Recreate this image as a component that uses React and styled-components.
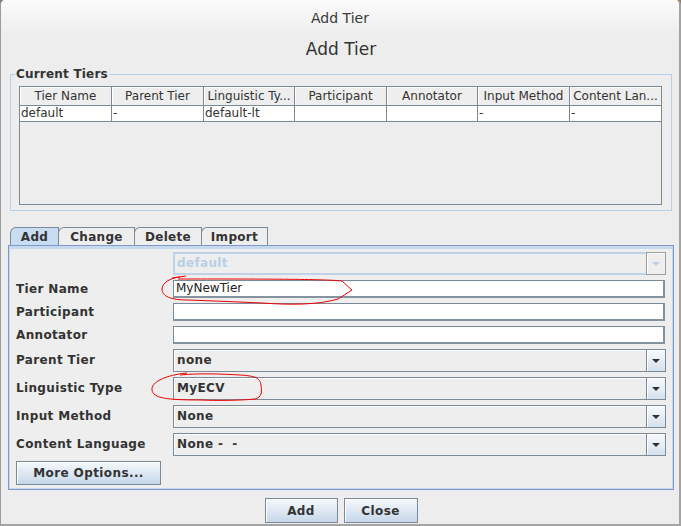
import styled, { createGlobalStyle } from "styled-components";

const GlobalStyle = createGlobalStyle`
  html, body {
    margin: 0;
    padding: 0;
    background: #8f7c66;
  }
  * {
    box-sizing: border-box;
  }
`;

const Window = styled.div`
  width: 681px;
  height: 526px;
  background: #ededed;
  border-left: 1px solid #9b9b9b;
  border-right: 2px solid #a3a3a3;
  border-bottom: 2px solid #a3a3a3;
  border-radius: 5px 5px 0 0;
  overflow: hidden;
  position: relative;
  font-family: "DejaVu Sans", "Liberation Sans", sans-serif;
  color: #333333;
`;

const TitleBar = styled.div`
  height: 36px;
  line-height: 36px;
  text-align: center;
  font-size: 14px;
  color: #3a3a3a;
  background: linear-gradient(#fbfbfb, #ededed);
`;

const Content = styled.div`
  padding: 0 5px 0 7px;
`;

const Heading = styled.div`
  margin-top: 3px;
  height: 20px;
  line-height: 20px;
  text-align: center;
  font-size: 17px;
  color: #333;
`;

const Group = styled.fieldset`
  margin: 8px 2px 0 2px;
  padding: 5px 9px 5px 8px;
  border: 1px solid #b8cfe5;
  min-width: 0;
`;

const Legend = styled.legend`
  padding: 0 1px;
  margin-left: -4px;
  font-size: 12px;
  line-height: 14px;
  font-weight: bold;
  letter-spacing: 0.2px;
  color: #333;
`;

const Table = styled.div`
  width: 643px;
  height: 119px;
  border: 1px solid #7a8a99;
  background: #ededed;
`;

const TableRow = styled.div`
  display: grid;
  grid-template-columns: 92px 92px 91px 92px 91px 92px 91px;
`;

const HeaderCell = styled.div`
  height: 19px;
  line-height: 18px;
  font-size: 12px;
  text-align: center;
  white-space: nowrap;
  overflow: hidden;
  background: #eeeeee;
  border-right: 1px solid #7a8a99;
  border-bottom: 1px solid #7a8a99;
  box-shadow: inset 1px 1px 0 #ffffff;
  &:last-child {
    border-right: none;
  }
`;

const Cell = styled.div`
  height: 16px;
  line-height: 15px;
  font-size: 12px;
  padding-left: 1px;
  white-space: nowrap;
  overflow: hidden;
  background: #ffffff;
  border-right: 1px solid #7a8a99;
  border-bottom: 1px solid #7a8a99;
  &:last-child {
    border-right: none;
  }
`;

const TabStrip = styled.div`
  display: flex;
  margin: 16px 0 0 2px;
  height: 18px;
`;

const Tab = styled.div`
  width: ${(p) => p.$w}px;
  height: 18px;
  margin-left: -1px;
  line-height: 18px;
  text-align: center;
  font-size: 12px;
  font-weight: bold;
  letter-spacing: 0.3px;
  color: #333;
  border: 1px solid #7a8a99;
  border-bottom: none;
  border-top-left-radius: 6px;
  background: ${(p) => (p.$active ? "#c8ddf2" : "#eeeeee")};
  &:first-child {
    margin-left: 0;
  }
`;

const Panel = styled.div`
  height: 245px;
  border: 1px solid #7c99c7;
  box-shadow: inset 0 0 0 1px #c6d9ee, inset 0 3px 0 #c6d9ee;
  background: #eeeeee;
  padding: 6px 7px 0 7px;
`;

const Form = styled.div`
  display: grid;
  grid-template-columns: 157px 1fr;
  row-gap: 5px;
  align-items: center;
`;

const Label = styled.div`
  margin-bottom: ${(p) => (p.$combo ? "2px" : "0")};
  font-size: 12px;
  font-weight: bold;
  letter-spacing: 0.35px;
  color: #333;
  white-space: nowrap;
`;

const TextField = styled.div`
  height: 18px;
  margin-right: 1px;
  background: #ffffff;
  border: 1px solid #7a8a99;
  border-right-width: 2px;
  border-bottom-width: 2px;
  border-right-color: #8593a1;
  border-bottom-color: #8593a1;
  font-size: 12px;
  line-height: 15px;
  padding-left: 2px;
  color: #222;
`;

const Combo = styled.div`
  display: flex;
  height: 23px;
`;

const ComboValue = styled.div`
  flex: 1;
  border: ${(p) => (p.$disabled ? "2px solid #bfd2e8" : "1px solid #7a8a99")};
  border-right: none;
  background: #eeeeee;
  box-shadow: ${(p) => (p.$disabled ? "none" : "inset 1px 1px 0 #ffffff")};
  font-size: 12px;
  font-weight: bold;
  letter-spacing: 0.35px;
  line-height: ${(p) => (p.$disabled ? "19px" : "21px")};
  padding-left: ${(p) => (p.$disabled ? "2px" : "3px")};
  color: ${(p) => (p.$disabled ? "#b8cfe5" : "#333")};
  white-space: pre;
`;

const ComboArrow = styled.div`
  width: 20px;
  display: flex;
  align-items: center;
  justify-content: center;
  border: 1px solid ${(p) => (p.$disabled ? "#9e9e9e" : "#7a8a99")};
  background: ${(p) =>
    p.$disabled ? "#eeeeee" : "linear-gradient(#f8fafd, #d5e1ee)"};
  box-shadow: inset 1px 1px 0 #ffffff;
  &::after {
    content: "";
    border-left: 4px solid transparent;
    border-right: 4px solid transparent;
    border-top: 4px solid ${(p) => (p.$disabled ? "#b8cfe5" : "#333")};
  }
`;

const Button = styled.button`
  display: block;
  width: ${(p) => p.$w}px;
  height: ${(p) => p.$h || 25}px;
  padding: 0;
  font-family: "DejaVu Sans", "Liberation Sans", sans-serif;
  font-size: 12px;
  font-weight: bold;
  letter-spacing: 0.4px;
  color: #333;
  border: 1px solid #7a8a99;
  border-radius: 0;
  background: linear-gradient(#f6f9fc, #c6d7ea);
  box-shadow: inset 1px 1px 0 #ffffff;
`;

const OptionsRow = styled.div`
  margin-top: 5px;
`;

const ButtonRow = styled.div`
  display: flex;
  justify-content: center;
  gap: 6px;
  margin-top: 8px;
`;

const Annotations = styled.svg`
  position: absolute;
  left: -1px;
  top: 0;
  pointer-events: none;
`;

function ComboBox({ value, disabled }) {
  return (
    <Combo>
      <ComboValue $disabled={disabled}>{value}</ComboValue>
      <ComboArrow $disabled={disabled} />
    </Combo>
  );
}

const columns = [
  "Tier Name",
  "Parent Tier",
  "Linguistic Ty...",
  "Participant",
  "Annotator",
  "Input Method",
  "Content Lan...",
];
const tierRow = ["default", "-", "default-lt", "", "", "-", "-"];

export default function App() {
  return (
    <>
      <GlobalStyle />
      <Window>
        <TitleBar>Add Tier</TitleBar>
        <Content>
          <Heading>Add Tier</Heading>
          <Group>
            <Legend>Current Tiers</Legend>
            <Table>
              <TableRow>
                {columns.map((c) => (
                  <HeaderCell key={c}>{c}</HeaderCell>
                ))}
              </TableRow>
              <TableRow>
                {tierRow.map((v, i) => (
                  <Cell key={i}>{v}</Cell>
                ))}
              </TableRow>
            </Table>
          </Group>

          <TabStrip>
            <Tab $w={49} $active>Add</Tab>
            <Tab $w={77}>Change</Tab>
            <Tab $w={68}>Delete</Tab>
            <Tab $w={67}>Import</Tab>
          </TabStrip>
          <Panel>
            <Form>
              <div />
              <ComboBox value="default" disabled />
              <Label>Tier Name</Label>
              <TextField>MyNewTier</TextField>
              <Label>Participant</Label>
              <TextField />
              <Label>Annotator</Label>
              <TextField />
              <Label $combo>Parent Tier</Label>
              <ComboBox value="none" />
              <Label $combo>Linguistic Type</Label>
              <ComboBox value="MyECV" />
              <Label $combo>Input Method</Label>
              <ComboBox value="None" />
              <Label $combo>Content Language</Label>
              <ComboBox value="None -  -" />
            </Form>
            <OptionsRow>
              <Button $w={145} $h={24}>More Options...</Button>
            </OptionsRow>
          </Panel>
          <ButtonRow>
            <Button $w={73}>Add</Button>
            <Button $w={74}>Close</Button>
          </ButtonRow>
        </Content>
        <Annotations width="681" height="526" viewBox="0 0 681 526">
          <g fill="none" stroke="#ee0000" strokeWidth="1">
            <path d="M172 278 L186 276 M180 277 C170 278 162 283 162 289 C162 296 170 300 188 300 C215 301 240 302 262 303 C290 305 318 305 338 299 L352 290 L342 281 C325 279 260 279 178 279" />
            <path d="M187 373 C166 375 151 382 152 390 C153 398 166 400 200 400 C225 401 245 400 255 399 C262 397 262 392 261 385 C260 378 256 376 240 375 C222 374 200 373 180 375" />
          </g>
        </Annotations>
      </Window>
    </>
  );
}
